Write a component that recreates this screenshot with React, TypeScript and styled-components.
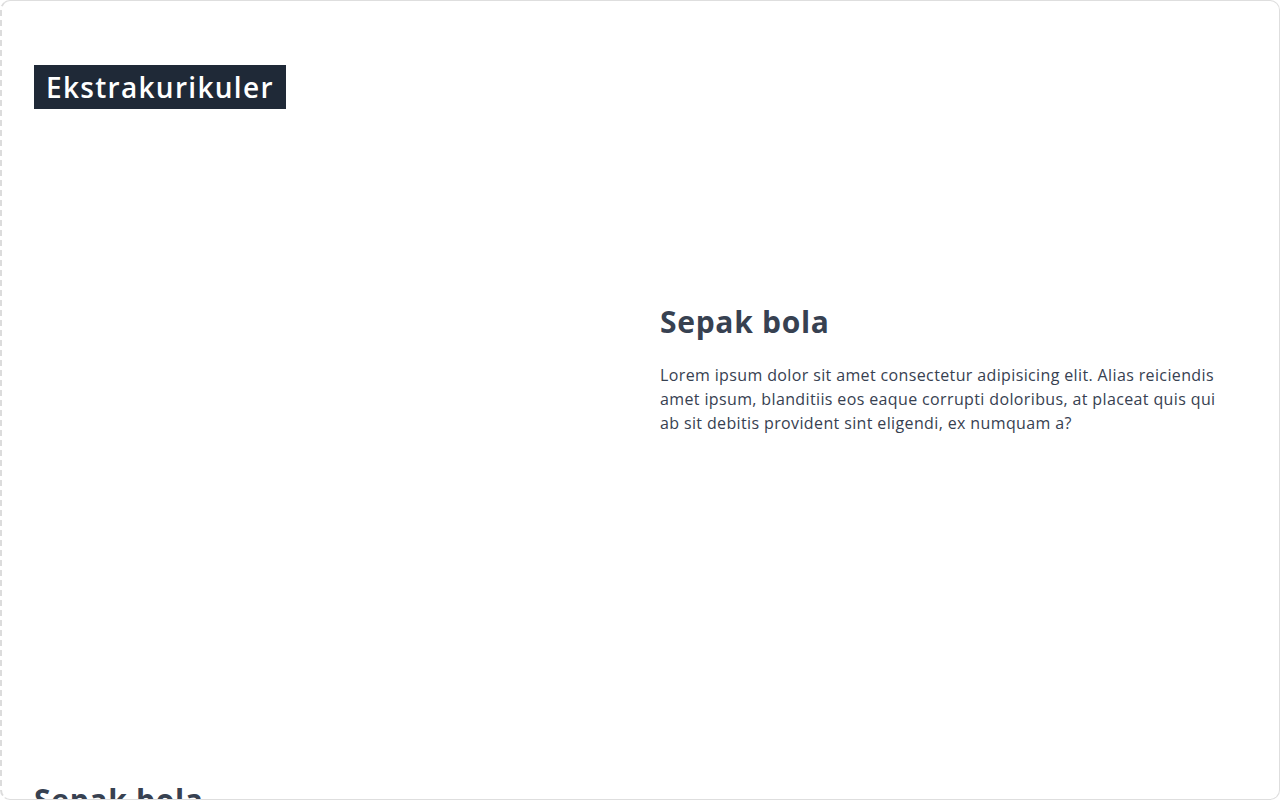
import styled, { createGlobalStyle } from "styled-components";

const GlobalStyle = createGlobalStyle`
  html, body {
    margin: 0;
    padding: 0;
    background: #ffffff;
  }
  * {
    box-sizing: border-box;
  }
`;

const activities = [
  {
    title: "Sepak bola",
    text: "Lorem ipsum dolor sit amet consectetur adipisicing elit. Alias reiciendis amet ipsum, blanditiis eos eaque corrupti doloribus, at placeat quis qui ab sit debitis provident sint eligendi, ex numquam a?",
  },
];

const App = () => {
  return (
    <>
      <GlobalStyle />
      <Frame>
        <Page>
          <PageTitle>Ekstrakurikuler</PageTitle>
          {activities.map((item) => (
            <Feature key={item.title}>
              <Picture />
              <FeatureBody>
                <FeatureTitle>{item.title}</FeatureTitle>
                <FeatureText>{item.text}</FeatureText>
              </FeatureBody>
            </Feature>
          ))}
          <NextTitle>Sepak bola</NextTitle>
        </Page>
      </Frame>
    </>
  );
};

export default App;

const Frame = styled.div`
  width: 1280px;
  height: 800px;
  overflow: hidden;
  border: 1px solid #dedede;
  border-left: 2px dashed #dcdcdc;
  border-radius: 10px;
  background: #ffffff;
`;

const Page = styled.main`
  padding: 64px 33px 0 32px;
  font-family: "Open Sans", "Liberation Sans", sans-serif;
  color: #374151;
`;

const PageTitle = styled.h1`
  display: inline-block;
  margin: 0;
  padding: 0 12px;
  height: 44px;
  line-height: 44px;
  font-size: 28px;
  font-weight: 600;
  letter-spacing: 1.3px;
  color: #ffffff;
  background-color: #1f2937;
`;

const Feature = styled.section`
  display: grid;
  grid-template-columns: 1fr 1fr;
  gap: 40px;
  align-items: center;
  height: 520px;
`;

const Picture = styled.div`
  height: 100%;
`;

const FeatureBody = styled.div`
  display: flex;
  flex-direction: column;
  gap: 23px;
  max-width: 566px;
`;

const FeatureTitle = styled.h2`
  margin: 0;
  font-size: 30px;
  line-height: 36px;
  font-weight: 700;
  letter-spacing: 0.7px;
  color: #374151;
`;

const FeatureText = styled.p`
  margin: 0;
  font-size: 16px;
  line-height: 24px;
  letter-spacing: 0.37px;
  color: #374151;
`;

const NextTitle = styled(FeatureTitle)`
  margin-top: 153px;
`;
